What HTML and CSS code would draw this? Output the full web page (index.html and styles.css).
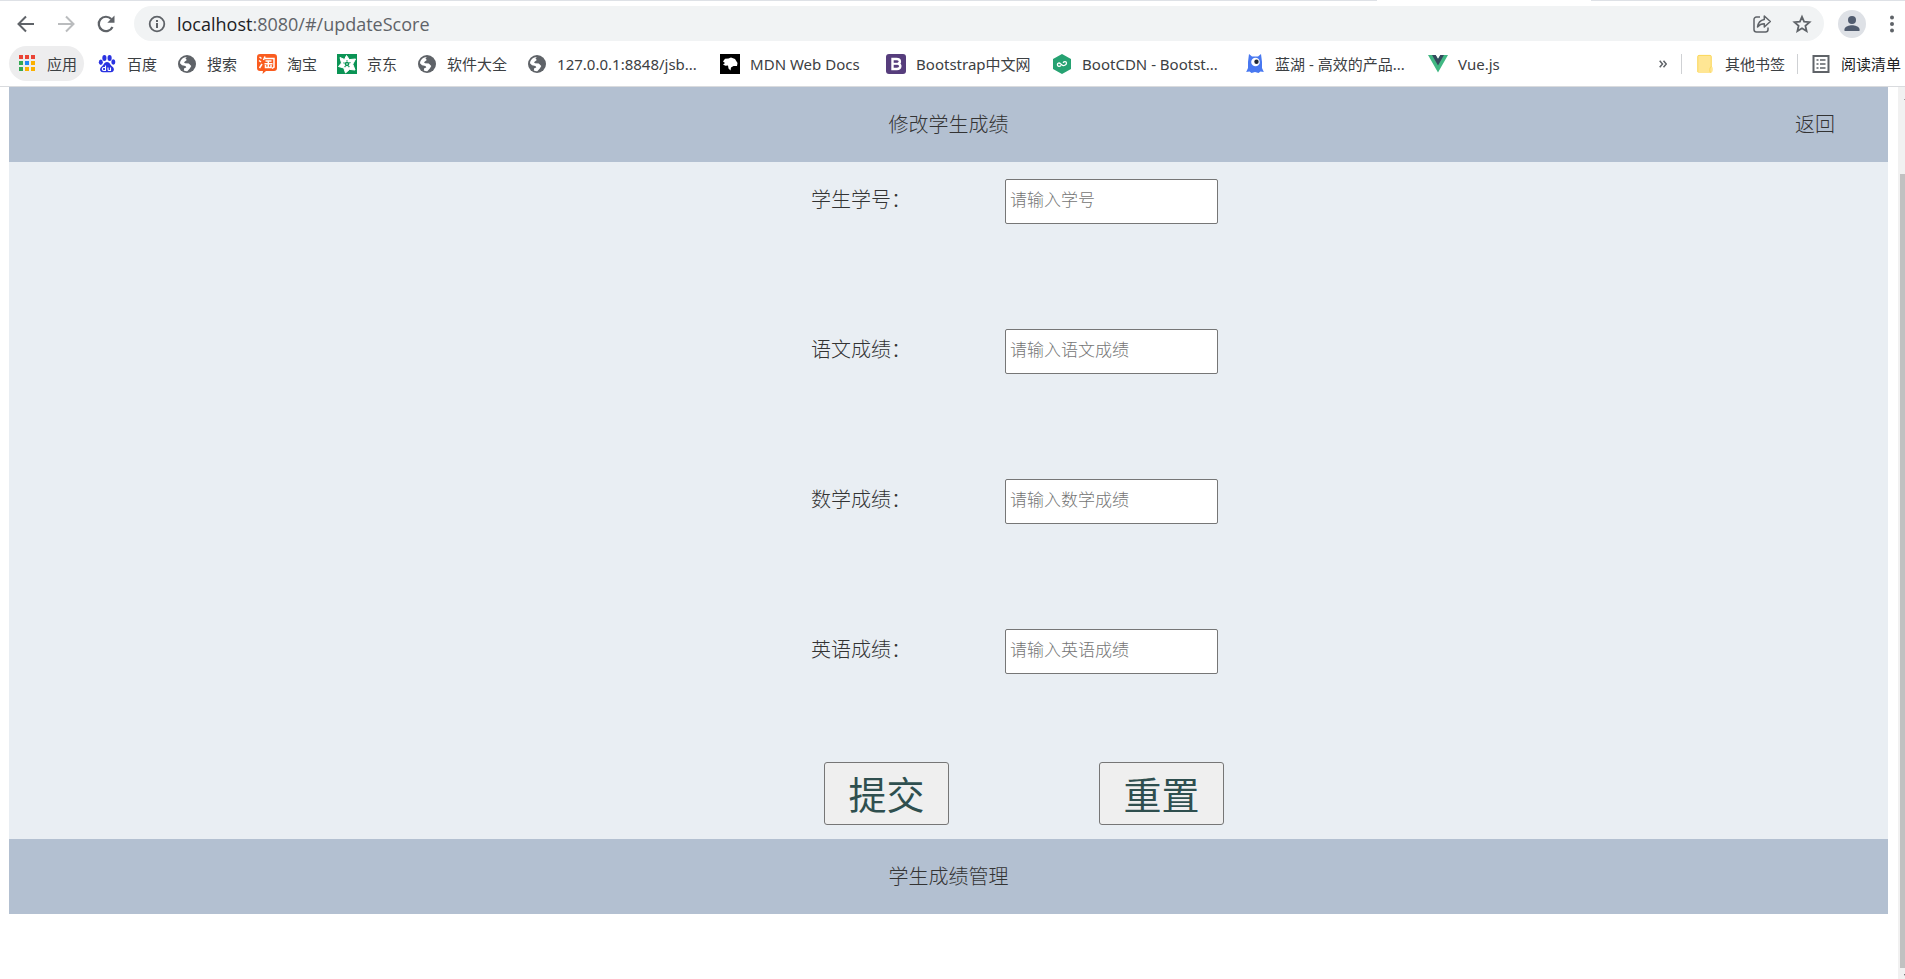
FILE: index.html
```html
<!DOCTYPE html>
<html lang="zh-CN">
<head>
<meta charset="utf-8">
<title>修改学生成绩</title>
<link rel="stylesheet" href="styles.css">
</head>
<body>
<svg class="defs" aria-hidden="true">
  <symbol id="globe" viewBox="0 0 20 20">
    <circle cx="10" cy="10" r="9" fill="#5f6368"/>
    <path d="M3 9.200C3.300 5.500 6.300 3 9.800 2.900L8.500 4.600 9.800 6.100 7 8.200 8 9.200 11.800 9.500 14.300 12 12.800 14.500 10.300 17.200C9 17.300 7.700 17 6.800 16.500L7.200 14.300 9.300 13.500 8.500 12 5 11.200Z" fill="#fff"/>
    <path d="M12 3.300C14.500 4 16.500 6.200 17 9L15.500 9.500 13 9.200 11.500 7.500 13.300 6Z" fill="#5f6368"/>
  </symbol>
</svg>

<header class="browser">
  <div class="tab-edge"><span class="edge edge-left"></span><span class="edge edge-right"></span></div>
  <div class="toolbar">
    <button class="tool" aria-label="后退"><svg viewBox="0 0 20 20"><path d="M18 10H3M10 2.500 2.500 10 10 17.500" fill="none" stroke="#5f6368" stroke-width="2"/></svg></button>
    <button class="tool" aria-label="前进"><svg viewBox="0 0 20 20"><path d="M2 10h15M10 2.500 17.500 10 10 17.500" fill="none" stroke="#babcbe" stroke-width="2"/></svg></button>
    <button class="tool" aria-label="重新加载"><svg viewBox="0 0 20 20"><path d="M16.500 13A7.200 7.200 0 1 1 15.300 5.100" fill="none" stroke="#5f6368" stroke-width="2.200"/><path d="M18.500 1.500V8.700H11.300Z" fill="#5f6368"/></svg></button>
    <div class="address">
      <svg class="info" viewBox="0 0 18 18"><circle cx="9" cy="9" r="7.300" fill="none" stroke="#5f6368" stroke-width="1.800"/><path d="M8 8h2v5H8zM8 5h2v2H8z" fill="#5f6368"/></svg>
      <div class="url">localhost<span class="path">:8080/#/updateScore</span></div>
      <button class="tool" aria-label="分享"><svg viewBox="0 0 20 20"><path d="M8 3H4.500A2.500 2.500 0 0 0 2 5.500v10A2.500 2.500 0 0 0 4.500 18h9a2.500 2.500 0 0 0 2.500-2.500V13.500" fill="none" stroke="#5f6368" stroke-width="1.500"/><path d="M12.300 2 18.300 7.500 12.300 13V9.800C9 9.800 7.300 10.800 5.500 13 6 8.800 8.500 6 12.300 5.400Z" fill="none" stroke="#5f6368" stroke-width="1.500" stroke-linejoin="round"/></svg></button>
      <button class="tool star" aria-label="收藏"><svg viewBox="0 0 20 20"><path d="M10 2.800 12.100 7.700 17.500 8.200 13.400 11.800 14.600 17.100 10 14.300 5.400 17.100 6.600 11.800 2.500 8.200 7.900 7.700Z" fill="none" stroke="#5f6368" stroke-width="1.800"/></svg></button>
    </div>
    <button class="avatar" aria-label="用户"><svg viewBox="0 0 28 28"><circle cx="14" cy="14" r="14" fill="#dee1e6"/><circle cx="14" cy="10" r="4" fill="#515c6f"/><path d="M6.500 21v-1.800C6.500 16.500 11.500 15.300 14 15.300s7.500 1.200 7.500 3.900V21Z" fill="#515c6f"/></svg></button>
    <button class="more" aria-label="菜单"><svg viewBox="0 0 6 20"><g fill="#5f6368"><circle cx="3" cy="3.500" r="2"/><circle cx="3" cy="10" r="2"/><circle cx="3" cy="16.500" r="2"/></g></svg></button>
  </div>

  <nav class="bookmarks">
    <a class="mark apps" href="#"><svg viewBox="0 0 20 20"><path fill="#ea4335" d="M2 1h4v4H2zM8 1h4v4H8zM14 1h4v4h-4z"/><path fill="#34a853" d="M2 7h4v4H2zM2 13h4v4H2z"/><path fill="#1e88f5" d="M8 7h4v4H8z"/><path fill="#fbb000" d="M14 7h4v4h-4zM8 13h4v4H8zM14 13h4v4h-4z"/></svg><span>应用</span></a>
    <a class="mark" href="#"><svg viewBox="0 0 20 20"><g fill="#2932e1"><ellipse cx="7.400" cy="4" rx="2.100" ry="3"/><ellipse cx="12.600" cy="4" rx="2.100" ry="3"/><ellipse cx="3.800" cy="8.300" rx="2" ry="2.700"/><ellipse cx="16.300" cy="8" rx="2" ry="2.700"/><path d="M10 8c3 0 3 3 5.500 4.700 2.500 2 1.500 5.500-1.500 5.500H6c-3 0-4-3.500-1.500-5.500C7 11 7 8 10 8Z"/></g><path d="M8.500 11.500v5H6.800a1.500 1.500 0 0 1 0-3H8.500M11 13.500v2a1 1 0 0 0 1 1h1.500v-3" fill="none" stroke="#fff" stroke-width="1.100"/></svg><span>百度</span></a>
    <a class="mark" href="#"><svg viewBox="0 0 20 20"><use href="#globe"/></svg><span>搜索</span></a>
    <a class="mark" href="#"><svg viewBox="0 0 20 20"><path d="M3 0h14a3 3 0 0 1 3 3v11a3 3 0 0 1-3 3H9l-3.500 3L6 17H3a3 3 0 0 1-3-3V3a3 3 0 0 1 3-3Z" fill="#fa5c1f"/><path d="M2.500 3 4.500 4.500M2 6.500 4 8M2.500 14 5 10M8 2.500 6.500 6M8 4.500h9V13l-2 1.500M8.500 7h6M7.500 9.700h8M11.300 7v6M8.500 11v2.500h5.500V11" fill="none" stroke="#fff" stroke-width="1.500"/></svg><span>淘宝</span></a>
    <a class="mark" href="#"><svg viewBox="0 0 20 20"><path fill="#0b9455" d="M0 0h20v20H0z"/><path d="M9.500 1.500 12.300 5.600 18.500 5 15.800 10.200 18 16 12.500 15.400 8.500 19 6.800 14 1.500 12.500 4.500 9 3 3.500 7.500 5.500Z" fill="#fff" stroke="#fff" stroke-linejoin="round"/><circle cx="10" cy="10" r="2.300" fill="#0b9455"/><circle cx="10" cy="10" r=".8" fill="#fff"/><path d="M10 7.500V6.300M12.200 9l1.300-.5M11.500 12l.8 1.200M8.500 12l-.9 1.200M7.700 9.200 6.400 8.800" stroke="#0b9455" stroke-width="1.200"/></svg><span>京东</span></a>
    <a class="mark" href="#"><svg viewBox="0 0 20 20"><use href="#globe"/></svg><span>软件大全</span></a>
    <a class="mark long" href="#"><svg viewBox="0 0 20 20"><use href="#globe"/></svg><span>127.0.0.1:8848/jsb...</span></a>
    <a class="mark medium" href="#"><svg viewBox="0 0 20 20"><path d="M0 0h20v20H0z"/><path d="M3 7.500 5 4.800 8.500 4.500 11 3.500 15 5 17.500 9 17 12H13.500L11 13.500 10.500 16.500 8.500 14.500 8 11.500 5.500 11.800 3 10.500 5 9Z" fill="#fff"/></svg><span>MDN Web Docs</span></a>
    <a class="mark medium" href="#"><svg viewBox="0 0 20 20"><rect width="20" height="20" rx="3" fill="#563d7c"/><path d="M6.500 5H10.500C15 5 14.500 9.200 12 9.700 15.500 10.200 15 15 11 15H6.500Z" fill="none" stroke="#fff" stroke-width="2.400"/><path d="M7 9.800h5" stroke="#fff" stroke-width="2"/></svg><span>Bootstrap中文网</span></a>
    <a class="mark long" href="#"><svg viewBox="0 0 20 20"><path d="M10 0 19 5v10L10 20 1 15V5Z" fill="#26a272"/><path d="M9 11.500C7.500 12.800 5.500 12.500 5.400 10.800 5.300 9 7.300 8.500 8.500 9.700L10 11C11.500 12.300 14.500 11 14.500 9 14.300 7.300 12.300 7.300 11 8.700" fill="none" stroke="#fff" stroke-width="1.300"/></svg><span>BootCDN - Bootst...</span></a>
    <a class="mark lake" href="#"><svg viewBox="0 0 20 20"><path d="M4 0 7 2.500h6L16 0 17 8v6l1.800 4-3.300-.5-2 1.500-3.500-1-3.500 1-2-1.500-3.300.5L3 14V8Z" fill="#4878f0"/><circle cx="10.500" cy="8" r="4.300" fill="#fff"/><circle cx="11.500" cy="7.700" r="2.200" fill="#202735"/></svg><span>蓝湖 - 高效的产品...</span></a>
    <a class="mark" href="#"><svg viewBox="0 0 20 20"><path d="M0 1h7.500L10 5l2.500-4H20L10 18.500Z" fill="#41b883"/><path d="M4 1h3.700L10 5l2.300-4H16L10 11.500Z" fill="#35495e"/></svg><span>Vue.js</span></a>
    <div class="marks-end">
      <button class="overflow" aria-label="更多书签"><svg viewBox="0 0 8 8"><path d="M.7.700 3.500 4 .7 7.300M4.500.700 7.300 4 4.500 7.300" fill="none" stroke="#5f6368" stroke-width="1.500"/></svg></button>
      <a class="mark group" href="#"><svg viewBox="0 0 20 20"><path d="M4 1h11a1.500 1.500 0 0 1 1.500 1.500V12.500c2 0 2 6.500-1 6.500H4a1.500 1.500 0 0 1-1.500-1.500v-15A1.500 1.500 0 0 1 4 1Z" fill="#ffe694"/><path d="M2.800 18V2.500A1.200 1.200 0 0 1 4 1.400H15A1.200 1.200 0 0 1 16.200 2.500V13c-1.700 0-2 5.500-.3 5.500" fill="none" stroke="#fbd75b"/></svg><span>其他书签</span></a>
      <a class="mark group reading" href="#"><svg viewBox="0 0 20 20"><path d="M2.500 2h15v16h-15z" fill="none" stroke="#5f6368" stroke-width="2"/><path d="M5.500 6h2M9 6h5.500M5.500 10h2M9 10h5.500M5.500 14h2M9 14h5.500" stroke="#5f6368" stroke-width="1.600"/></svg><span>阅读清单</span></a>
    </div>
  </nav>
</header>

<div class="viewport">
  <div class="page">
    <header class="band">
      <h1>修改学生成绩</h1>
      <a class="back" href="#">返回</a>
    </header>
    <main>
      <form>
        <div class="row"><label for="sid">学生学号：</label><input id="sid" type="text" placeholder="请输入学号"></div>
        <div class="row"><label for="chinese">语文成绩：</label><input id="chinese" type="text" placeholder="请输入语文成绩"></div>
        <div class="row"><label for="math">数学成绩：</label><input id="math" type="text" placeholder="请输入数学成绩"></div>
        <div class="row"><label for="english">英语成绩：</label><input id="english" type="text" placeholder="请输入英语成绩"></div>
        <div class="actions"><button type="button">提交</button><button type="reset">重置</button></div>
      </form>
    </main>
    <footer class="band">学生成绩管理</footer>
  </div>
  <div class="scrollbar" aria-hidden="true">
    <svg class="arrow" viewBox="0 0 5 17"><path d="M5 13h-1l1-1z" fill="#505050"/></svg>
    <div class="thumb"></div>
    <svg class="arrow-down" viewBox="0 0 5 11"><path d="M4 6h1v2z" fill="#505050"/></svg>
  </div>
</div>
</body>
</html>
```
FILE: styles.css
```css
* { box-sizing: border-box; }
html, body { height: 100%; }
body {
  margin: 0;
  display: flex;
  flex-direction: column;
  overflow: hidden;
  background: #fff;
  color: #333;
  font-family: "Noto Sans", "Noto Sans CJK SC", sans-serif;
}
button, input { font-family: inherit; }
a { color: inherit; text-decoration: none; }
svg { display: block; flex: none; }
.defs { position: absolute; width: 0; height: 0; }

.browser { flex: none; border-bottom: 1px solid #d9dbde; }
.tab-edge { display: flex; justify-content: space-between; height: 1px; }
.edge { background: #dee1e6; }
.edge-left { width: 1377px; }
.edge-right { width: 314px; }

.toolbar {
  display: flex;
  align-items: center;
  gap: 20px;
  height: 45px;
  padding: 0 10px 0 16px;
}
.tool, .avatar, .more, .overflow {
  flex: none;
  padding: 0;
  border: 0;
  background: none;
}
.tool svg { width: 20px; height: 20px; }
.address {
  flex: 1;
  display: flex;
  align-items: center;
  height: 35px;
  margin: 0 -6px 0 -2px;
  padding: 0 12px 0 14px;
  border-radius: 18px;
  background: #f1f3f4;
}
.info { width: 18px; height: 18px; }
.url {
  flex: 1;
  margin-left: 11px;
  font-family: "Open Sans", sans-serif;
  font-size: 18px;
  line-height: 24px;
  color: #202124;
}
.path { color: #5f6368; }
.star { margin-left: 20px; }
.avatar svg { width: 28px; height: 28px; }
.more { margin-left: 3px; }
.more svg { width: 6px; height: 20px; }

.bookmarks {
  display: flex;
  align-items: center;
  height: 40px;
  padding: 0 0 5px 9px;
  font-size: 15px;
  line-height: 20px;
  color: #3c4043;
  white-space: nowrap;
}
.mark {
  display: flex;
  align-items: center;
  gap: 10px;
  margin-right: 20px;
}
.mark svg { width: 20px; height: 20px; }
.apps {
  height: 35px;
  margin-right: 13px;
  padding: 0 7px 0 8px;
  border-radius: 18px;
  background: #ededee;
}
.long { width: 173px; }
.medium { width: 146px; }
.lake { width: 163px; }
.marks-end {
  display: flex;
  align-items: center;
  margin-left: auto;
}
.overflow { margin-right: 14px; }
.overflow svg { width: 8px; height: 8px; }
.group {
  height: 20px;
  margin-right: 12px;
  padding-left: 13px;
  border-left: 1px solid #cfd1d4;
}
.reading { margin-right: 4px; color: #202124; }

.viewport { flex: 1; display: flex; min-height: 0; }
.page {
  flex: 1;
  padding: 0 10px 0 9px;
  font-size: 20px;
  font-weight: 300;
  line-height: 75px;
}
.band {
  position: relative;
  height: 75px;
  background: #b3c0d1;
  text-align: center;
}
h1 { margin: 0; font-size: 20px; font-weight: 300; }
.back { position: absolute; top: 0; right: 53px; }

main {
  display: flex;
  justify-content: center;
  padding: 0 0 14px 138px;
  background: #e9eef3;
}
.row {
  display: grid;
  grid-template-columns: 194px 213px;
  align-items: start;
  height: 150px;
}
.row input {
  height: 45px;
  margin-top: 17px;
  padding: 1px 4px 5px;
  border: 1px solid #767676;
  border-radius: 2px;
  background: #fff;
  font-size: 17px;
  font-weight: 300;
}
.row input::placeholder { color: #757575; }
.actions { display: flex; gap: 150px; margin-left: 13px; }
.actions button {
  width: 125px;
  height: 63px;
  padding: 0;
  border: 1px solid #767676;
  border-radius: 3px;
  background: #efefef;
  color: #2f4f4f;
  font-size: 38px;
  line-height: 56px;
}

.scrollbar {
  display: flex;
  flex-direction: column;
  width: 7px;
  padding-left: 2px;
  background: #f1f1f1;
}
.arrow { width: 5px; height: 17px; }
.thumb { flex: 1; margin-top: 70px; background: #c1c1c1; }
.arrow-down { width: 5px; height: 11px; }
```
